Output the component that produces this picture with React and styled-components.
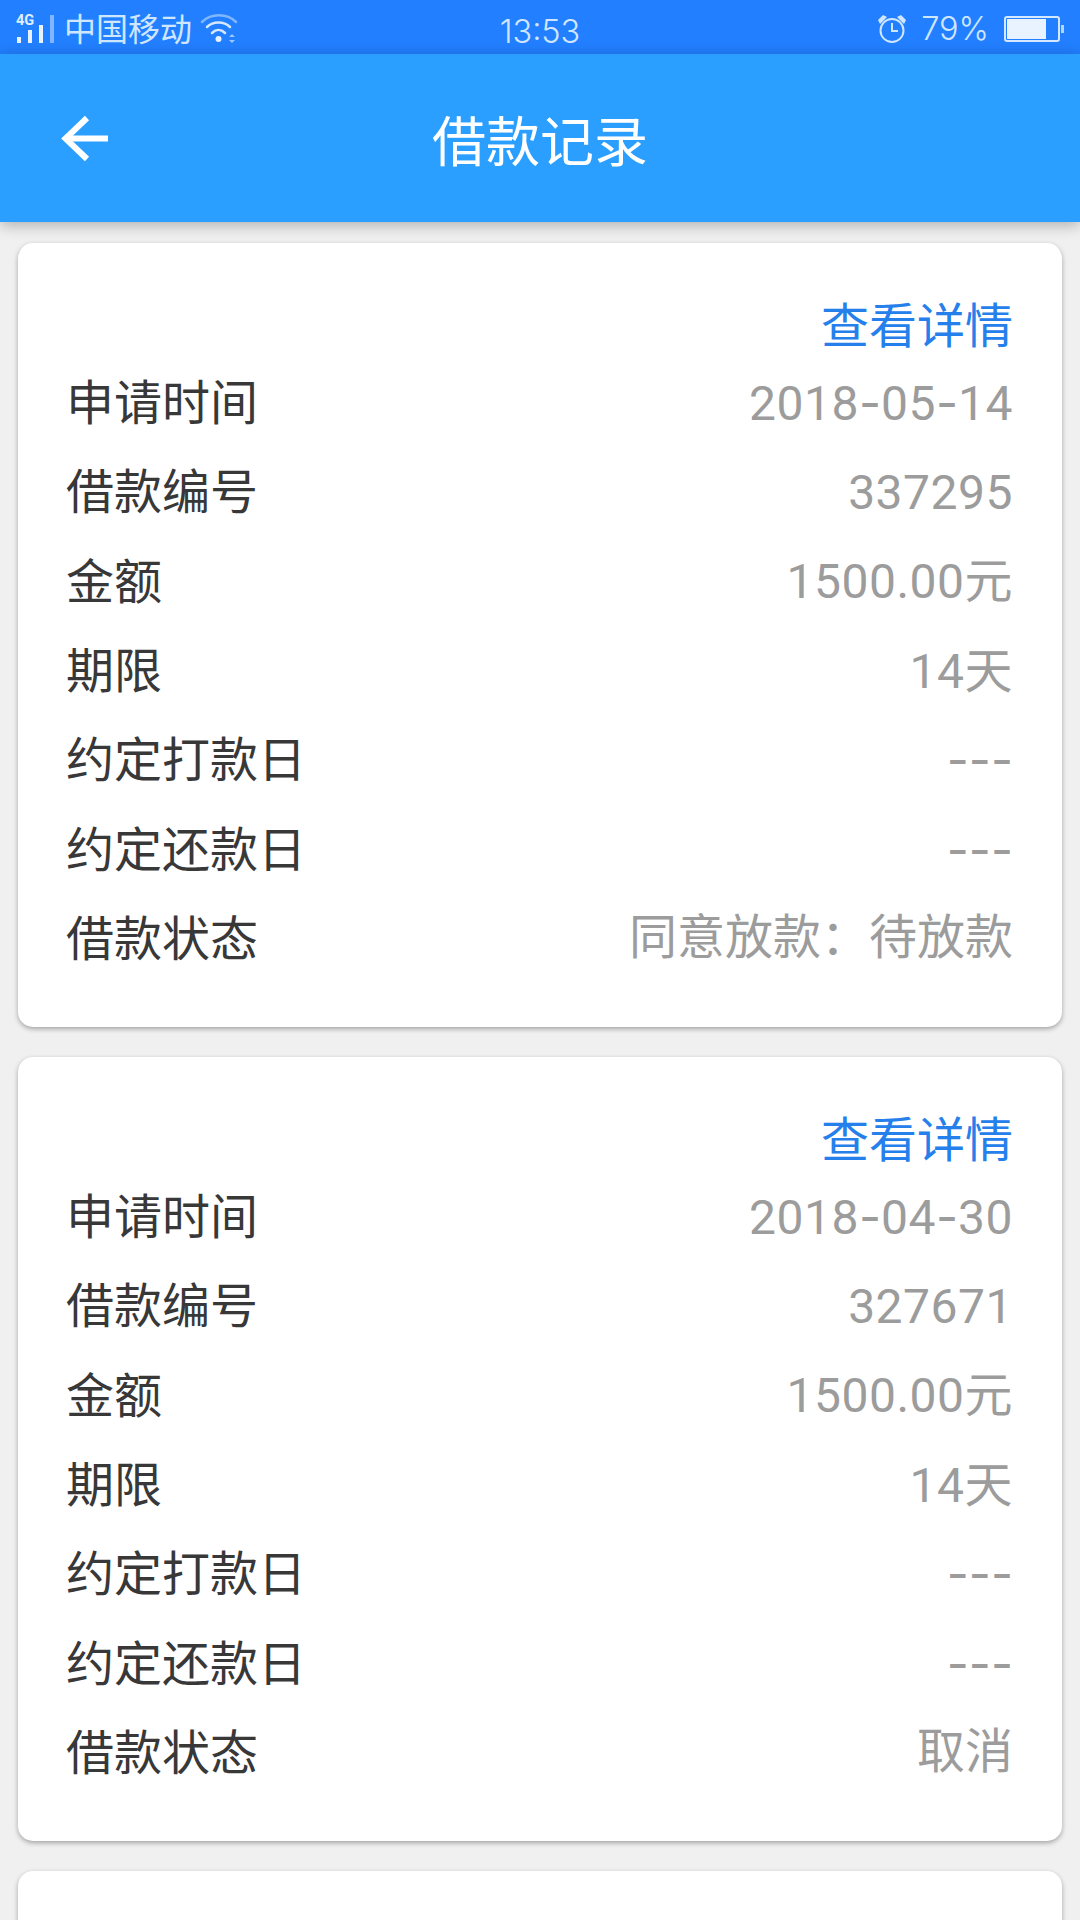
import styled, { createGlobalStyle } from "styled-components"

const Global = createGlobalStyle`
    html, body {
        margin: 0;
        padding: 0;
        background: #f0f0f0;
    }
    body {
        font-family: Roboto, "Noto Sans CJK SC", sans-serif;
    }
`

const Page = styled.div`
    width: 1080px;
    height: 1920px;
    overflow: hidden;
    background: #f0f0f0;
`

const StatusBar = styled.div`
    height: 54px;
    background: #227fff;
    color: #cfe6ff;
    display: grid;
    grid-template-columns: 1fr auto 1fr;
    align-items: center;
    padding: 0 16px;
`

const StatusLeft = styled.div`
    display: flex;
    align-items: center;
    gap: 8px;
`

const StatusRight = styled.div`
    display: flex;
    align-items: center;
    justify-content: flex-end;
    gap: 15px;
`

const Carrier = styled.span`
    font-size: 32px;
    line-height: 54px;
    padding-top: 3px;
`

const StatusText = styled.span`
    font-family: Inter, sans-serif;
    font-weight: 300;
    font-size: 32.5px;
    padding-top: ${props => props.$low ? "5px" : "0"};
`

const AppBar = styled.header`
    height: 168px;
    background: #2a9fff;
    box-shadow: 0 3px 14px rgba(0, 0, 0, 0.28);
    display: grid;
    grid-template-columns: 1fr auto 1fr;
    align-items: center;
    padding: 0 61px;
    position: relative;
`

const BackButton = styled.div`
    display: flex;
    align-items: center;
`

const Title = styled.h1`
    margin: 0;
    color: #fff;
    font-size: 54px;
    font-weight: 400;
`

const List = styled.main`
    padding: 21px 18px 0;
    display: flex;
    flex-direction: column;
    gap: 30px;
`

const Card = styled.section`
    height: 784px;
    flex-shrink: 0;
    box-sizing: border-box;
    background: #fff;
    border-radius: 15px;
    box-shadow: 0 2px 5px rgba(0, 0, 0, 0.32);
    padding: 54px 49px 0 48px;
    display: flex;
    flex-direction: column;
`

const DetailLink = styled.a`
    align-self: flex-end;
    color: #2680eb;
    font-size: 48px;
    line-height: 60px;
    margin-bottom: -2.5px;
`

const Row = styled.div`
    display: flex;
    justify-content: space-between;
    align-items: center;
    height: 89.3px;
    font-size: 48px;
`

const Label = styled.span`
    color: #383838;
`

const ValueText = styled.span`
    color: #9c9c9c;
    line-height: 60px;
    letter-spacing: ${props => props.$text ? "0" : "0.5px"};
    padding-top: ${props => props.$text ? "7px" : "9px"};
`

// the hyphens in the picture are much longer than Roboto's
const Dash = styled.span`
    font-family: Inter, sans-serif;
    letter-spacing: 0;
`

const Value = ({ text, children }) => (
    <ValueText $text={text}>
        {children.split(/(-)/).map((part, i) => part === "-" ? <Dash key={i}>-</Dash> : part)}
    </ValueText>
)

const SignalIcon = () => (
    <svg width="40" height="34" viewBox="0 0 40 34">
        <text x="0" y="13" fontSize="14.5" fontWeight="700" fontFamily="Roboto, sans-serif" fill="#e0efff">4G</text>
        <rect x="1" y="25" width="4" height="6" fill="#e8f3ff" />
        <rect x="12" y="18" width="4" height="13" fill="#e8f3ff" />
        <rect x="23" y="13" width="4" height="18" fill="#e8f3ff" />
        <rect x="34" y="3" width="4" height="28" fill="#7fb6ff" />
    </svg>
)

const WifiIcon = () => (
    <svg width="38" height="32" viewBox="0 0 38 32" fill="none" strokeLinecap="round">
        <path d="M2 9 C 11 0, 27 0, 36 9" stroke="#7fb6ff" strokeWidth="2.5" />
        <path d="M7 14 C 13 8, 24 8, 30 14" stroke="#d5e8ff" strokeWidth="2.5" />
        <path d="M12 20 C 16 16, 21 16, 25 20" stroke="#d5e8ff" strokeWidth="2.5" />
        <circle cx="18.5" cy="26" r="3" fill="#e8f3ff" />
        <path d="M29 24 L32 21 L35 24 Z M29 27 L35 27 L32 30 Z" fill="#9cc6ff" />
    </svg>
)

const AlarmIcon = () => (
    <svg width="28" height="28" viewBox="0 0 28 28" fill="none">
        <circle cx="14" cy="15.5" r="11.5" stroke="#cfe6ff" strokeWidth="2" />
        <path d="M14 8 V16 H20" stroke="#cfe6ff" strokeWidth="2" />
        <path d="M0 5 L5 0 L9 2 L2 9 Z M28 5 L23 0 L19 2 L26 9 Z" fill="#cfe6ff" />
    </svg>
)

const BatteryIcon = () => (
    <svg width="60" height="26" viewBox="0 0 60 26" fill="none">
        <rect x="1" y="1" width="54" height="24" rx="2" stroke="#d5e8ff" strokeWidth="2" />
        <rect x="3" y="3" width="39" height="20" fill="#e8f3ff" />
        <rect x="57" y="9" width="3" height="8" fill="#b5d6ff" />
    </svg>
)

const BackIcon = () => (
    <svg width="47" height="47" viewBox="0 0 47 47" fill="none" stroke="#fff" strokeWidth="6">
        <path d="M4 23.5 H47" />
        <path d="M26 3 L4.5 23.5 L26 44" />
    </svg>
)

const records = [
    { date: "2018-05-14", id: "337295", status: "同意放款：待放款" },
    { date: "2018-04-30", id: "327671", status: "取消" },
    { date: "", id: "", status: "" },
]

const RecordCard = ({ record }) => (
    <Card>
        {record.id && (
            <>
                <DetailLink>查看详情</DetailLink>
                <Row><Label>申请时间</Label><Value>{record.date}</Value></Row>
                <Row><Label>借款编号</Label><Value>{record.id}</Value></Row>
                <Row><Label>金额</Label><Value>1500.00元</Value></Row>
                <Row><Label>期限</Label><Value>14天</Value></Row>
                <Row><Label>约定打款日</Label><Value>---</Value></Row>
                <Row><Label>约定还款日</Label><Value>---</Value></Row>
                <Row><Label>借款状态</Label><Value text>{record.status}</Value></Row>
            </>
        )}
    </Card>
)

const App = () => (
    <Page>
        <Global />
        <StatusBar>
            <StatusLeft>
                <SignalIcon />
                <Carrier>中国移动</Carrier>
                <WifiIcon />
            </StatusLeft>
            <StatusText $low>13:53</StatusText>
            <StatusRight>
                <AlarmIcon />
                <StatusText>79%</StatusText>
                <BatteryIcon />
            </StatusRight>
        </StatusBar>
        <AppBar>
            <BackButton><BackIcon /></BackButton>
            <Title>借款记录</Title>
        </AppBar>
        <List>
            {records.map((record, i) => <RecordCard key={i} record={record} />)}
        </List>
    </Page>
)

export default App
